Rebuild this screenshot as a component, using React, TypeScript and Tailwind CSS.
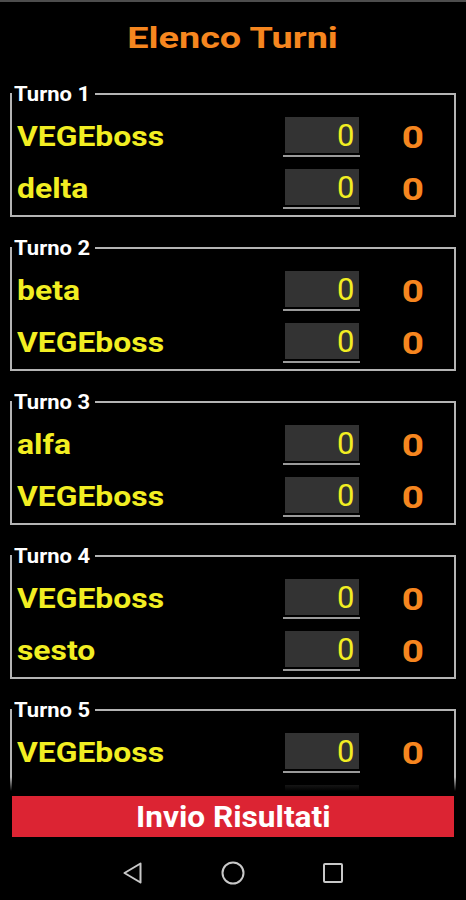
const turni = [
  { id: 1, players: ["VEGEboss", "delta"] },
  { id: 2, players: ["beta", "VEGEboss"] },
  { id: 3, players: ["alfa", "VEGEboss"] },
  { id: 4, players: ["VEGEboss", "sesto"] },
  { id: 5, players: ["VEGEboss", "quinto"] },
]

function PlayerRow({ name }: { name: string }) {
  return (
    <div className="flex h-[52px] items-center">
      <div className="flex-1 text-[27px] font-bold leading-none text-[#f2ee22]">
        <span className="inline-block origin-left scale-x-[1.18]">{name}</span>
      </div>
      <div className="w-[77px]">
        <div className="mx-[1.5px] flex h-[36px] items-center justify-end bg-[#333333] pr-[4px] text-[31px] leading-none text-[#f2ee22]">
          0
        </div>
        <div className="mt-[1.5px] h-[2px] bg-[#9a9a9a]" />
      </div>
      <div className="ml-[33px] w-[40px] text-center text-[31px] font-bold leading-none text-[#f6861f]">
        <span className="inline-block scale-x-[1.25]">0</span>
      </div>
      <div className="w-[21px]" />
    </div>
  )
}

export default function App() {
  return (
    <div className="flex h-[900px] w-full flex-col overflow-hidden bg-black font-['Roboto',sans-serif]">
      <div className="h-[2px] bg-[#4d4d4d]" />
      <div className="h-[81px] pt-[21px] text-center text-[30px] font-bold leading-[30px] text-[#f6861f]">
        <span className="inline-block scale-x-[1.26]">Elenco Turni</span>
      </div>

      <div className="relative flex h-[708px] flex-col gap-[20px] overflow-hidden px-[10px]">
        {turni.map((turno) => (
          <fieldset key={turno.id} className="border-2 border-[#b4b4b4]">
            <legend className="pl-[2px] pr-[12px] text-[20px] font-bold leading-[22px] text-white">
              <span className="inline-block origin-left scale-x-[1.1]">Turno {turno.id}</span>
            </legend>
            <div className="pl-[5px] pt-[6px]">
              {turno.players.map((p, i) => (
                <PlayerRow key={i} name={p} />
              ))}
            </div>
          </fieldset>
        ))}
        <div className="pointer-events-none absolute bottom-0 left-0 right-0 h-[14px] bg-gradient-to-b from-transparent to-black" />
      </div>

      <div className="mx-[12px] mt-[5px] flex h-[41px] items-center justify-center bg-[#dc2433] text-[29px] font-bold leading-[34px] text-white">
        <span className="inline-block scale-x-[1.09]">Invio Risultati</span>
      </div>

      <div className="flex flex-1 items-center justify-center gap-[76px] pt-[8px]">
        <svg width="24" height="24" viewBox="0 0 24 24" fill="none" stroke="#c8c8c8" strokeWidth="2" strokeLinejoin="round">
          <path d="M19.5 2.5 L3.5 12 L19.5 21.5 Z" />
        </svg>
        <svg width="24" height="24" viewBox="0 0 24 24" fill="none" stroke="#c8c8c8" strokeWidth="2">
          <circle cx="12" cy="12" r="10.5" />
        </svg>
        <svg width="24" height="24" viewBox="0 0 24 24" fill="none" stroke="#c8c8c8" strokeWidth="2">
          <rect x="3" y="3" width="18" height="18" rx="1" />
        </svg>
      </div>
    </div>
  )
}
